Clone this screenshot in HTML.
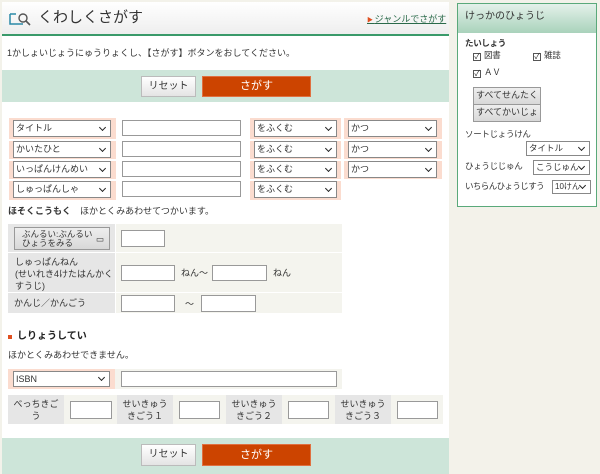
<!DOCTYPE html>
<html><head><meta charset="utf-8"><style>
*{box-sizing:border-box;margin:0;padding:0}
body{width:600px;height:474px;background:#f3f2ea;font-family:"Liberation Sans","Noto Sans CJK JP",sans-serif;font-size:9px;line-height:1.2;color:#333;position:relative;overflow:hidden}
.a{position:absolute}
.main{left:2px;top:2px;width:447px;height:472px;background:#fff}
.hdr{left:2px;top:2px;width:447px;height:34px;background:linear-gradient(#fff,#eee);border-bottom:2px solid #3a9a6a}
.bar{background:#cde5d9}
.btnr{background:linear-gradient(#fff,#e4e4e4);border:1px solid #bbb;font-size:10px;text-align:center;line-height:19px;color:#333}
.btns{background:#cc4400;border:1px solid #e07040;color:#fff;font-size:11px;text-align:center;line-height:19px}
.pk{background:#fbdccf}
.sel{background:#fff;border:1px solid #888;font-size:9px;line-height:14px;padding-left:2px;white-space:nowrap;overflow:hidden}
.sel:after{content:"";position:absolute;right:5px;top:50%;margin-top:-4px;width:4px;height:4px;border-right:1.5px solid #222;border-bottom:1.5px solid #222;transform:rotate(45deg)}
.in{background:#fff;border:1px solid #999}
.lg{background:#e6e6e6}
.lb{background:#f4f4ee}
.cb{display:inline-block;width:8px;height:8px;border:1px solid #555;font-size:8px;line-height:6px;text-align:center;margin-right:3px;vertical-align:-1px}
.sbtn{background:linear-gradient(#eee,#d8d8d8);border:1px solid #999;text-align:center;line-height:15px;font-size:9px}
.sb{font-size:8.5px;letter-spacing:-0.3px;white-space:nowrap}
</style></head><body>
<div class="a main"></div>
<div class="a hdr"></div>
<svg class="a" style="left:8px;top:11px" width="26" height="16"><path d="M2 3v10h9M2 3h6M11 13h4" stroke="#2b8aa8" fill="none" stroke-width="1.5"/><circle cx="15" cy="7" r="4" stroke="#555" fill="none" stroke-width="1.4"/><path d="M18 10l4 4" stroke="#555" stroke-width="1.6"/></svg>
<div class="a" style="left:38px;top:9px;font-size:15px;color:#333">くわしくさがす</div>
<div class="a" style="left:367px;top:14px;font-size:9px;color:#2a6a4a;text-decoration:underline"><span style="color:#e05020;text-decoration:none;font-size:6px">▶ </span>ジャンルでさがす</div>
<div class="a" style="left:7px;top:48px">1かしょいじょうにゅうりょくし、【さがす】ボタンをおしてください。</div>
<div class="a bar" style="left:2px;top:70px;width:447px;height:32px"></div>
<div class="a btnr" style="left:141px;top:76px;width:55px;height:21px">リセット</div>
<div class="a btns" style="left:202px;top:76px;width:109px;height:21px">さがす</div>

<div class="a pk" style="left:9px;top:118px;width:107px;height:82px"></div>
<div class="a pk" style="left:250px;top:118px;width:91px;height:82px"></div>
<div class="a pk" style="left:344px;top:118px;width:98px;height:62px"></div>
<div class="a" style="left:9px;top:139px;width:435px;height:2px;background:#fff"></div>
<div class="a" style="left:9px;top:159px;width:435px;height:2px;background:#fff"></div>
<div class="a" style="left:9px;top:179px;width:435px;height:2px;background:#fff"></div>

<div class="a sel" style="left:13px;top:120px;width:98px;height:17px">タイトル</div>
<div class="a sel" style="left:13px;top:141px;width:98px;height:17px">かいたひと</div>
<div class="a sel" style="left:13px;top:161px;width:98px;height:17px">いっぱんけんめい</div>
<div class="a sel" style="left:13px;top:181px;width:98px;height:17px">しゅっぱんしゃ</div>
<div class="a in" style="left:122px;top:120px;width:119px;height:16px"></div>
<div class="a in" style="left:122px;top:141px;width:119px;height:16px"></div>
<div class="a in" style="left:122px;top:161px;width:119px;height:16px"></div>
<div class="a in" style="left:122px;top:181px;width:119px;height:16px"></div>
<div class="a sel" style="left:254px;top:120px;width:83px;height:17px">をふくむ</div>
<div class="a sel" style="left:254px;top:141px;width:83px;height:17px">をふくむ</div>
<div class="a sel" style="left:254px;top:161px;width:83px;height:17px">をふくむ</div>
<div class="a sel" style="left:254px;top:181px;width:83px;height:17px">をふくむ</div>
<div class="a sel" style="left:348px;top:120px;width:89px;height:17px">かつ</div>
<div class="a sel" style="left:348px;top:141px;width:89px;height:17px">かつ</div>
<div class="a sel" style="left:348px;top:161px;width:89px;height:17px">かつ</div>

<div class="a" style="left:8px;top:206px"><b>ほそくこうもく</b>　ほかとくみあわせてつかいます。</div>
<div class="a lb" style="left:8px;top:224px;width:334px;height:89px"></div>
<div class="a lg" style="left:8px;top:224px;width:107px;height:89px"></div>
<div class="a" style="left:8px;top:252px;width:334px;height:1px;background:#fff"></div>
<div class="a" style="left:8px;top:292px;width:334px;height:1px;background:#fff"></div>
<div class="a" style="left:115px;top:224px;width:1px;height:89px;background:#fff"></div>
<div class="a sbtn" style="left:14px;top:227px;width:96px;height:23px;line-height:9px;text-align:left;padding:2px 0 0 7px;font-size:8.5px">ぶんるい:ぶんるい<br>ひょうをみる<span style="position:absolute;right:5px;top:7px">▭</span></div>
<div class="a in" style="left:121px;top:230px;width:44px;height:17px"></div>
<div class="a" style="left:15px;top:256px;line-height:12px">しゅっぱんねん<br>(せいれき4けたはんかく<br>すうじ)</div>
<div class="a in" style="left:121px;top:265px;width:54px;height:16px"></div>
<div class="a" style="left:181px;top:268px">ねん～</div>
<div class="a in" style="left:212px;top:265px;width:55px;height:16px"></div>
<div class="a" style="left:273px;top:268px">ねん</div>
<div class="a" style="left:14px;top:298px">かんじ／かんごう</div>
<div class="a in" style="left:121px;top:295px;width:54px;height:17px"></div>
<div class="a" style="left:185px;top:299px">～</div>
<div class="a in" style="left:201px;top:295px;width:55px;height:17px"></div>

<div class="a" style="left:8px;top:335px;width:4px;height:4px;background:#e05020"></div>
<div class="a" style="left:17px;top:331px;font-size:10px;font-weight:bold;color:#222">しりょうしてい</div>
<div class="a" style="left:8px;top:350px">ほかとくみあわせできません。</div>
<div class="a pk" style="left:8px;top:369px;width:107px;height:20px"></div>
<div class="a lb" style="left:115px;top:369px;width:227px;height:20px"></div>
<div class="a sel" style="left:13px;top:371px;width:97px;height:16px">ISBN</div>
<div class="a in" style="left:121px;top:371px;width:216px;height:16px"></div>

<div class="a lb" style="left:8px;top:395px;width:435px;height:29px"></div>
<div class="a lg" style="left:8px;top:395px;width:56px;height:29px;text-align:center;line-height:12px;padding-top:3px">べっちきご<br>う</div>
<div class="a lg" style="left:117px;top:395px;width:56px;height:29px;text-align:center;line-height:12px;padding-top:3px">せいきゅう<br>きごう１</div>
<div class="a lg" style="left:226px;top:395px;width:56px;height:29px;text-align:center;line-height:12px;padding-top:3px">せいきゅう<br>きごう２</div>
<div class="a lg" style="left:335px;top:395px;width:56px;height:29px;text-align:center;line-height:12px;padding-top:3px">せいきゅう<br>きごう３</div>
<div class="a in" style="left:70px;top:401px;width:42px;height:18px"></div>
<div class="a in" style="left:179px;top:401px;width:41px;height:18px"></div>
<div class="a in" style="left:288px;top:401px;width:41px;height:18px"></div>
<div class="a in" style="left:397px;top:401px;width:41px;height:18px"></div>

<div class="a bar" style="left:2px;top:438px;width:447px;height:36px"></div>
<div class="a btnr" style="left:141px;top:444px;width:55px;height:22px;line-height:20px">リセット</div>
<div class="a btns" style="left:202px;top:444px;width:109px;height:22px;line-height:20px">さがす</div>

<div class="a" style="left:457px;top:3px;width:140px;height:204px;background:#fff;border:1px solid #5aa97a"></div>
<div class="a" style="left:458px;top:4px;width:138px;height:29px;background:linear-gradient(#e4f1ea,#a9d2bb)"></div>
<div class="a" style="left:465px;top:11px;font-size:10px">けっかのひょうじ</div>
<div class="a sb" style="left:465px;top:38px;font-weight:bold">たいしょう</div>
<div class="a sb" style="left:473px;top:50px"><span class="cb">✓</span>図書</div>
<div class="a sb" style="left:533px;top:50px"><span class="cb">✓</span>雑誌</div>
<div class="a sb" style="left:473px;top:67px"><span class="cb">✓</span>ＡＶ</div>
<div class="a sbtn" style="left:473px;top:87px;width:68px;height:18px">すべてせんたく</div>
<div class="a sbtn" style="left:473px;top:104px;width:68px;height:18px">すべてかいじょ</div>
<div class="a sb" style="left:465px;top:129px">ソートじょうけん</div>
<div class="a sel" style="left:526px;top:141px;width:64px;height:15px;line-height:13px;font-size:8.5px">タイトル</div>
<div class="a sb" style="left:465px;top:161px">ひょうじじゅん</div>
<div class="a sel" style="left:533px;top:160px;width:57px;height:15px;line-height:13px;font-size:8.5px">こうじゅん</div>
<div class="a sb" style="left:465px;top:181px;letter-spacing:-0.6px">いちらんひょうじすう</div>
<div class="a sel" style="left:552px;top:180px;width:39px;height:14px;line-height:12px;font-size:8px">10けん</div>
</body></html>
